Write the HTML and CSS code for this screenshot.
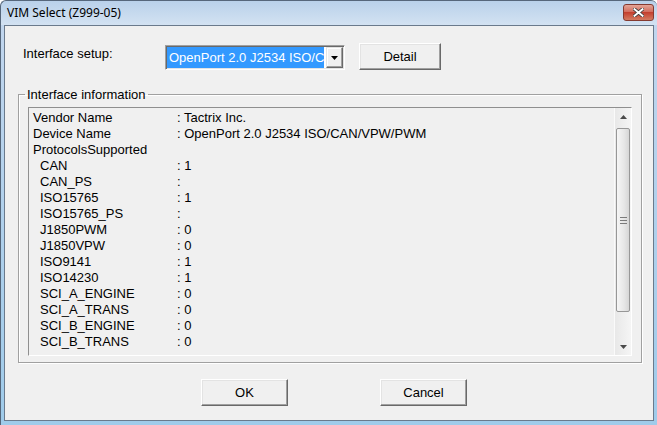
FILE: index.html
```html
<!DOCTYPE html>
<html lang="en">
<head>
    <meta charset="UTF-8">
    <title>VIM Select (Z999-05)</title>
    <link rel="stylesheet" href="styles.css">
</head>
<body>
    <div class="window">
        <div class="title-bar">
            <span class="title">VIM Select (Z999-05)</span>
            <button class="close-button">
                <svg width="11" height="9" viewBox="0 0 11 9">
                    <path d="M1.5 1.2 L9.5 7.8 M9.5 1.2 L1.5 7.8" stroke="#3a3a3a" stroke-width="3.6" stroke-linecap="square" fill="none"/>
                    <path d="M1.5 1.2 L9.5 7.8 M9.5 1.2 L1.5 7.8" stroke="#fff" stroke-width="2" stroke-linecap="square" fill="none"/>
                </svg>
            </button>
        </div>

        <div class="client">
            <!-- Interface setup row -->
            <div class="setup-row">
                <label class="setup-label">Interface setup:</label>
                <div class="combo">
                    <span class="combo-selected">OpenPort 2.0 J2534 ISO/CA</span>
                    <span class="combo-arrow">
                        <svg width="7" height="4" viewBox="0 0 7 4"><path d="M0 0 H7 L3.5 4 Z" fill="#000"/></svg>
                    </span>
                </div>
                <button class="win-button detail-button">Detail</button>
            </div>

            <!-- Interface information group -->
            <fieldset class="info-group">
                <legend>Interface information</legend>
                <div class="info-box">
                    <div class="info-list">
                        <div class="info-row"><span>Vendor Name</span><span>: Tactrix Inc.</span></div>
                        <div class="info-row"><span>Device Name</span><span>: OpenPort 2.0 J2534 ISO/CAN/VPW/PWM</span></div>
                        <div class="info-row"><span>ProtocolsSupported</span><span></span></div>
                        <div class="info-row sub"><span>CAN</span><span>: 1</span></div>
                        <div class="info-row sub"><span>CAN_PS</span><span>:</span></div>
                        <div class="info-row sub"><span>ISO15765</span><span>: 1</span></div>
                        <div class="info-row sub"><span>ISO15765_PS</span><span>:</span></div>
                        <div class="info-row sub"><span>J1850PWM</span><span>: 0</span></div>
                        <div class="info-row sub"><span>J1850VPW</span><span>: 0</span></div>
                        <div class="info-row sub"><span>ISO9141</span><span>: 1</span></div>
                        <div class="info-row sub"><span>ISO14230</span><span>: 1</span></div>
                        <div class="info-row sub"><span>SCI_A_ENGINE</span><span>: 0</span></div>
                        <div class="info-row sub"><span>SCI_A_TRANS</span><span>: 0</span></div>
                        <div class="info-row sub"><span>SCI_B_ENGINE</span><span>: 0</span></div>
                        <div class="info-row sub"><span>SCI_B_TRANS</span><span>: 0</span></div>
                    </div>
                    <div class="scrollbar">
                        <div class="scroll-arrow">
                            <svg width="7" height="4" viewBox="0 0 7 4"><path d="M0 4 H7 L3.5 0 Z" fill="#4a4a4a"/></svg>
                        </div>
                        <div class="scroll-track">
                            <div class="scroll-thumb">
                                <svg width="7" height="7" viewBox="0 0 7 7">
                                    <path d="M0 0.5 H7 M0 3.5 H7 M0 6.5 H7" stroke="#7b7b7b" stroke-width="1"/>
                                </svg>
                            </div>
                        </div>
                        <div class="scroll-arrow">
                            <svg width="7" height="4" viewBox="0 0 7 4"><path d="M0 0 H7 L3.5 4 Z" fill="#4a4a4a"/></svg>
                        </div>
                    </div>
                </div>
            </fieldset>

            <!-- Dialog buttons -->
            <div class="dialog-buttons">
                <button class="win-button">OK</button>
                <button class="win-button">Cancel</button>
            </div>
        </div>
    </div>
</body>
</html>
```

FILE: styles.css
```css
/* Global settings */
:root {
    --color-face: #f0f0f0;
    --color-shadow: #a0a0a0;
    --color-dark: #696969;
    --color-highlight: #3399ff;
    --font-default: 'Liberation Sans', Arial, sans-serif;
    --font-title: 'Noto Sans', 'Open Sans', sans-serif;
}

body {
    margin: 0;
    background: #fff;
    font-family: var(--font-default);
    font-size: 13px;
    color: #000;
}

button {
    font-family: var(--font-default);
    font-size: 13px;
    color: #000;
    padding: 0;
}

/* Window frame */
.window {
    width: 657px;
    height: 425px;
    box-sizing: border-box;
    display: flex;
    flex-direction: column;
    padding: 0 3px 4px 3px;
    border-top: 1px solid #56677b;
    border-left: 1px solid #56677b;
    border-top-left-radius: 6px;
    border-top-right-radius: 6px;
    background: linear-gradient(to bottom, #b9d1ea 0, #d3e2f2 24px, #c1d6ee 24px, #9fcbea 100%);
}

.title-bar {
    height: 24px;
    display: flex;
    justify-content: space-between;
    align-items: flex-start;
}

.title {
    font-family: var(--font-title);
    font-size: 12px;
    line-height: 24px;
    padding-left: 3px;
}

.close-button {
    width: 31px;
    height: 17px;
    margin-top: 3px;
    margin-right: 0;
    border: 1px solid #843a30;
    border-radius: 3px;
    background: linear-gradient(to bottom, #e4a597 0, #d26e5f 45%, #c4402f 50%, #d37b61 100%);
    display: flex;
    align-items: center;
    justify-content: center;
    box-sizing: border-box;
}

.client {
    flex: 1;
    display: flex;
    flex-direction: column;
    background: var(--color-face);
    border: 1px solid #6a7a8c;
}

/* Classic raised button */
.win-button {
    width: 87px;
    height: 27px;
    box-sizing: border-box;
    background: var(--color-face);
    border: 1px solid;
    border-color: #fff var(--color-dark) var(--color-dark) #fff;
    box-shadow: inset -1px -1px 0 var(--color-shadow), inset 1px 1px 0 #e3e3e3;
}

/* Setup row */
.setup-row {
    display: flex;
    align-items: flex-start;
    padding: 17px 0 0 18px;
}

.setup-label {
    width: 142px;
    margin-top: 3px;
    line-height: 15px;
}

.combo {
    width: 180px;
    height: 25px;
    margin-top: 2px;
    box-sizing: border-box;
    display: flex;
    gap: 2px;
    background: #fff;
    border: 1px solid;
    border-color: var(--color-shadow) #fff #fff var(--color-shadow);
    box-shadow: inset 1px 1px 0 var(--color-dark), inset -1px -1px 0 #e3e3e3;
    padding: 1px;
}

.combo-selected {
    width: 155px;
    height: 21px;
    padding-left: 2px;
    line-height: 21px;
    background: var(--color-highlight);
    color: #fff;
    white-space: nowrap;
    overflow: hidden;
}

.combo-arrow {
    width: 17px;
    height: 21px;
    box-sizing: border-box;
    display: flex;
    align-items: center;
    justify-content: center;
    background: var(--color-face);
    border: 1px solid;
    border-color: #e3e3e3 var(--color-dark) var(--color-dark) #e3e3e3;
    box-shadow: inset -1px -1px 0 var(--color-shadow), inset 1px 1px 0 #fff;
}

.detail-button {
    width: 82px;
    margin-left: 14px;
}

/* Interface information group */
.info-group {
    width: 624px;
    box-sizing: border-box;
    margin: 17px 0 0 13px;
    padding: 5px 9px 6px 9px;
    border: 1px solid var(--color-shadow);
    box-shadow: 1px 1px 0 #fff, inset 1px 1px 0 #fff;
}

.info-group legend {
    margin-left: -3px;
    padding: 0 2px;
    line-height: 15px;
}

.info-box {
    height: 249px;
    box-sizing: border-box;
    display: flex;
    background: var(--color-face);
    border: 1px solid;
    border-color: #8f8f8f #fff #fff #8f8f8f;
}

.info-list {
    flex: 1;
    padding: 2px 0 0 4px;
    line-height: 16px;
    overflow: hidden;
}

.info-row {
    display: grid;
    grid-template-columns: 144px 1fr;
    white-space: nowrap;
}

.info-row.sub span:first-child {
    padding-left: 7px;
}

/* Scrollbar */
.scrollbar {
    width: 17px;
    display: flex;
    flex-direction: column;
    background: linear-gradient(to right, #e8e8e8, #f5f5f5);
    border-left: 1px solid #fafafa;
    box-sizing: border-box;
}

.scroll-arrow {
    height: 17px;
    display: flex;
    align-items: center;
    justify-content: center;
}

.scroll-track {
    flex: 1;
    padding: 3px 1px 0 1px;
}

.scroll-thumb {
    height: 184px;
    box-sizing: border-box;
    display: flex;
    align-items: center;
    justify-content: center;
    border: 1px solid #979797;
    border-radius: 2px;
    background: linear-gradient(to right, #f6f6f6, #e6e6e6 60%, #d6d6d6);
}

/* Bottom buttons */
.dialog-buttons {
    display: flex;
    gap: 92px;
    margin-top: 16px;
    padding-left: 196px;
}
```
